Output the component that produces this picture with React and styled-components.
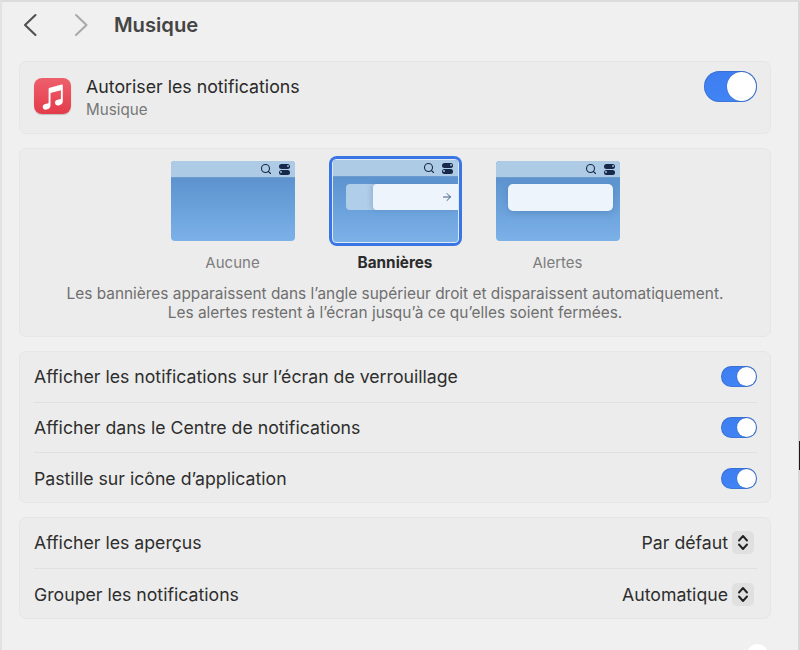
import React from "react"
import styled, { createGlobalStyle } from "styled-components"
import { ArrowRight, Search } from "lucide-react"

const GlobalStyle = createGlobalStyle`
  html, body {
    margin: 0;
    height: 100%;
    overflow: hidden;
    background: #f0f0f0;
    font-family: Inter, "Noto Sans", sans-serif;
    color: #2b2b2b;
  }
`

const Page = styled.div`
  width: 800px;
  height: 650px;
  box-sizing: border-box;
  padding: 0 0 0 17px;
  overflow: hidden;
  position: relative;
  border-top: 2px solid #dcdcdc;
  border-left: 2px solid #e2e2e2;
`

const WindowEdge = styled.span`
  position: absolute;
  top: 0;
  right: 0;
  bottom: 0;
  width: 2px;
  background: #d8d8d8;

  &::after {
    content: "";
    position: absolute;
    top: 439px;
    right: 0;
    width: 1px;
    height: 29px;
    background: #1a1a1a;
  }
`

const TitleBar = styled.header`
  display: flex;
  align-items: center;
  height: 45px;
  margin-bottom: 14px;
`

const NavButton = styled.span`
  display: flex;
  width: 14px;
  justify-content: center;
  color: ${p => (p.$disabled ? "#a9a9a9" : "#505050")};
  margin-left: ${p => p.$offset || 0}px;
`

const Title = styled.h1`
  margin: 0 0 0 26px;
  font-size: 20.2px;
  font-weight: 600;
  color: #454545;
`

const Panel = styled.section`
  box-sizing: border-box;
  width: 752px;
  background: #ececec;
  border: 1px solid #e6e6e6;
  border-radius: 7px;
  margin-bottom: 14px;
`

const AppRow = styled.div`
  display: flex;
  align-items: flex-start;
  height: 71px;
  padding: 0 13px 0 14px;
`

const AppIcon = styled.div`
  width: 37px;
  height: 36px;
  margin: 16px 15px 0 0;
  border-radius: 8px;
  background: linear-gradient(#ee5f6c, #e33c4a);
  box-shadow: 0 1px 1px rgba(0, 0, 0, 0.2);
`

const AppText = styled.div`
  flex: 1;
  padding-top: 13px;
`

const AppName = styled.div`
  font-size: 17.75px;
  line-height: 24px;
  color: #2a2a2a;
`

const AppSub = styled.div`
  font-size: 15.2px;
  line-height: 22px;
  color: #777;
`

const Toggle = styled.span`
  position: relative;
  display: block;
  box-sizing: border-box;
  width: ${p => (p.$big ? 53 : 36)}px;
  height: ${p => (p.$big ? 31 : 21)}px;
  margin-top: ${p => (p.$big ? 9 : 0)}px;
  border-radius: 16px;
  background: linear-gradient(#3d7df0, #4184f5);
  box-shadow: inset 0 0 0 1px rgba(50, 90, 160, 0.35);

  &::after {
    content: "";
    position: absolute;
    right: 1px;
    top: 1px;
    width: ${p => (p.$big ? 29 : 19)}px;
    height: ${p => (p.$big ? 29 : 19)}px;
    border-radius: 50%;
    background: #fff;
    box-shadow: 0 0 1px rgba(0, 0, 0, 0.4);
  }
`

const StylePanel = styled(Panel)`
  height: 189px;
  padding-top: 7px;
`

const Previews = styled.div`
  display: flex;
  justify-content: center;
  gap: 34px;
`

const PreviewColumn = styled.div`
  display: flex;
  flex-direction: column;
  align-items: center;
  width: ${p => (p.$wide ? 133 : 124)}px;
`

const PreviewFrame = styled.div`
  box-sizing: border-box;
  width: ${p => (p.$selected ? 133 : 124)}px;
  height: ${p => (p.$selected ? 90 : 80)}px;
  margin: ${p => (p.$selected ? 0 : 5)}px 0;
  padding: ${p => (p.$selected ? 3 : 0)}px;
  border-radius: ${p => (p.$selected ? 8 : 4)}px;
  background: ${p => (p.$selected ? "#3a75e4" : "transparent")};
`

const Screen = styled.div`
  height: 100%;
  border-radius: 4px;
  overflow: hidden;
  background: linear-gradient(#548bc8, #7cb1e8);
  position: relative;
  border: ${p => (p.$selected ? "1px solid #dfe9f5" : "none")};
  box-sizing: border-box;
`

const MenuBar = styled.div`
  display: flex;
  justify-content: flex-end;
  align-items: center;
  gap: 7px;
  height: 17px;
  box-sizing: border-box;
  padding-right: 5px;
  background: #aecbe6;
  border-bottom: 1px solid #6d9bcb;
`

const ControlIcon = styled.span`
  display: flex;
  flex-direction: column;
  gap: 1px;
  width: 11px;
`

const ControlPill = styled.span`
  position: relative;
  display: block;
  height: 5px;
  border-radius: 2.5px;
  background: #16294a;

  &::after {
    content: "";
    position: absolute;
    top: 1.5px;
    ${p => (p.$end ? "right: 1px" : "left: 1px")};
    width: 2px;
    height: 2px;
    border-radius: 50%;
    background: #9fbcdb;
  }
`

const BannerBack = styled.div`
  position: absolute;
  left: 13px;
  right: 0;
  top: 24px;
  height: 26px;
  border-radius: 4px 0 0 4px;
  background: #b0cde9;
`

const BannerFront = styled.div`
  position: absolute;
  left: 40px;
  right: 0;
  top: 24px;
  height: 26px;
  border-radius: 4px 0 0 4px;
  background: #eef4fb;
  box-shadow: -2px 0 5px rgba(50, 90, 140, 0.2);
  display: flex;
  align-items: center;
  justify-content: flex-end;
  padding-right: 5px;
  color: #3f5f88;
`

const AlertCard = styled.div`
  position: absolute;
  left: 12px;
  right: 7px;
  top: 23px;
  height: 27px;
  border-radius: 5px;
  background: #eef4fb;
  box-shadow: 0 2px 6px rgba(40, 80, 130, 0.25);
`

const PreviewLabel = styled.div`
  margin-top: 7px;
  font-size: ${p => (p.$selected ? 15.3 : 15)}px;
  line-height: 20px;
  font-weight: ${p => (p.$selected ? 700 : 400)};
  color: ${p => (p.$selected ? "#2b2b2b" : "#7d7d7d")};
`

const Description = styled.p`
  margin: 11px 0 0;
  text-align: center;
  font-size: 15.4px;
  line-height: 19px;
  color: #6f6f6f;
`

const Row = styled.div`
  box-sizing: border-box;
  display: flex;
  align-items: center;
  justify-content: space-between;
  height: 50px;
  margin: 0 13px 0 14px;
  padding-bottom: ${p => (p.$first ? 2 : 0)}px;
  padding-top: ${p => (p.$last ? 1 : 0)}px;
  border-top: ${p => (p.$first ? "none" : "1px solid #e0e0e0")};
  font-size: 17.7px;
  color: #2e2e2e;
`

const SelectValue = styled.span`
  display: flex;
  align-items: center;
  gap: 4px;
  margin-right: 3px;
`

const Stepper = styled.span`
  display: flex;
  align-items: center;
  justify-content: center;
  width: 22px;
  height: 23px;
  border-radius: 5px;
  background: #e0e0e0;
`

const PeekKnob = styled.span`
  position: absolute;
  left: 745px;
  top: 642px;
  width: 21px;
  height: 21px;
  border-radius: 50%;
  background: #fff;
`

const NoteIcon = () => (
  <svg width="37" height="36" viewBox="0 0 37 36" fill="#fff">
    <path d="M14 10.2 27.6 6.6c.7-.2 1.2.2 1.2.9v15.6c0 2.4-1.6 3.9-4 4.3-2.2.3-3.800-.8-3.800-2.600 0-1.700 1.300-2.800 3.400-3.200l1.600-.3c.6-.1.9-.4.9-1v-8l-10.400 2.600v12.400c0 2.400-1.600 3.900-4 4.300-2.200.3-3.800-.8-3.800-2.600 0-1.700 1.300-2.800 3.400-3.200l1.600-.3c.6-.1.9-.4.9-1V11.300c0-.6.3-1 1-1.100z" />
  </svg>
)

const Chevron = ({ flip }) => (
  <svg width="14" height="24" viewBox="0 0 14 24" fill="none" stroke="currentColor" strokeWidth="2.1" strokeLinecap="round" strokeLinejoin="round">
    <path d={flip ? "M2 2l10.500 10L2 22" : "M12.500 2 2 12l10.500 10"} />
  </svg>
)

const UpDown = () => (
  <svg width="12" height="17" viewBox="0 0 12 17" fill="none" stroke="#222" strokeWidth="1.9" strokeLinecap="round" strokeLinejoin="round">
    <path d="M2 6.500 6 2l4 4.500M2 10.500l4 4.500 4-4.500" />
  </svg>
)

const Bar = () => (
  <MenuBar>
    <Search size={12} color="#16294a" strokeWidth={2.2} />
    <ControlIcon>
      <ControlPill $end />
      <ControlPill />
    </ControlIcon>
  </MenuBar>
)

const toggles = [
  "Afficher les notifications sur l’écran de verrouillage",
  "Afficher dans le Centre de notifications",
  "Pastille sur icône d’application",
]

const selects = [
  { label: "Afficher les aperçus", value: "Par défaut" },
  { label: "Grouper les notifications", value: "Automatique" },
]

const App = () => (
  <Page>
    <GlobalStyle />
    <TitleBar>
      <NavButton $offset={4}>
        <Chevron />
      </NavButton>
      <NavButton $disabled $offset={37}>
        <Chevron flip />
      </NavButton>
      <Title>Musique</Title>
    </TitleBar>

    <Panel>
      <AppRow>
        <AppIcon>
          <NoteIcon />
        </AppIcon>
        <AppText>
          <AppName>Autoriser les notifications</AppName>
          <AppSub>Musique</AppSub>
        </AppText>
        <Toggle $big />
      </AppRow>
    </Panel>

    <StylePanel>
      <Previews>
        <PreviewColumn>
          <PreviewFrame>
            <Screen>
              <Bar />
            </Screen>
          </PreviewFrame>
          <PreviewLabel>Aucune</PreviewLabel>
        </PreviewColumn>
        <PreviewColumn $wide>
          <PreviewFrame $selected>
            <Screen $selected>
              <Bar />
              <BannerBack />
              <BannerFront>
                <ArrowRight size={12} />
              </BannerFront>
            </Screen>
          </PreviewFrame>
          <PreviewLabel $selected>Bannières</PreviewLabel>
        </PreviewColumn>
        <PreviewColumn>
          <PreviewFrame>
            <Screen>
              <Bar />
              <AlertCard />
            </Screen>
          </PreviewFrame>
          <PreviewLabel>Alertes</PreviewLabel>
        </PreviewColumn>
      </Previews>
      <Description>
        Les bannières apparaissent dans l’angle supérieur droit et disparaissent automatiquement.
        <br />
        Les alertes restent à l’écran jusqu’à ce qu’elles soient fermées.
      </Description>
    </StylePanel>

    <Panel>
      {toggles.map((label, i) => (
        <Row key={label} $first={i === 0} $last={i === toggles.length - 1}>
          {label}
          <Toggle />
        </Row>
      ))}
    </Panel>

    <Panel>
      {selects.map(({ label, value }, i) => (
        <Row key={label} $first={i === 0} $last={i === selects.length - 1}>
          {label}
          <SelectValue>
            {value}
            <Stepper>
              <UpDown />
            </Stepper>
          </SelectValue>
        </Row>
      ))}
    </Panel>

    <PeekKnob />
    <WindowEdge />
  </Page>
)

export default App
